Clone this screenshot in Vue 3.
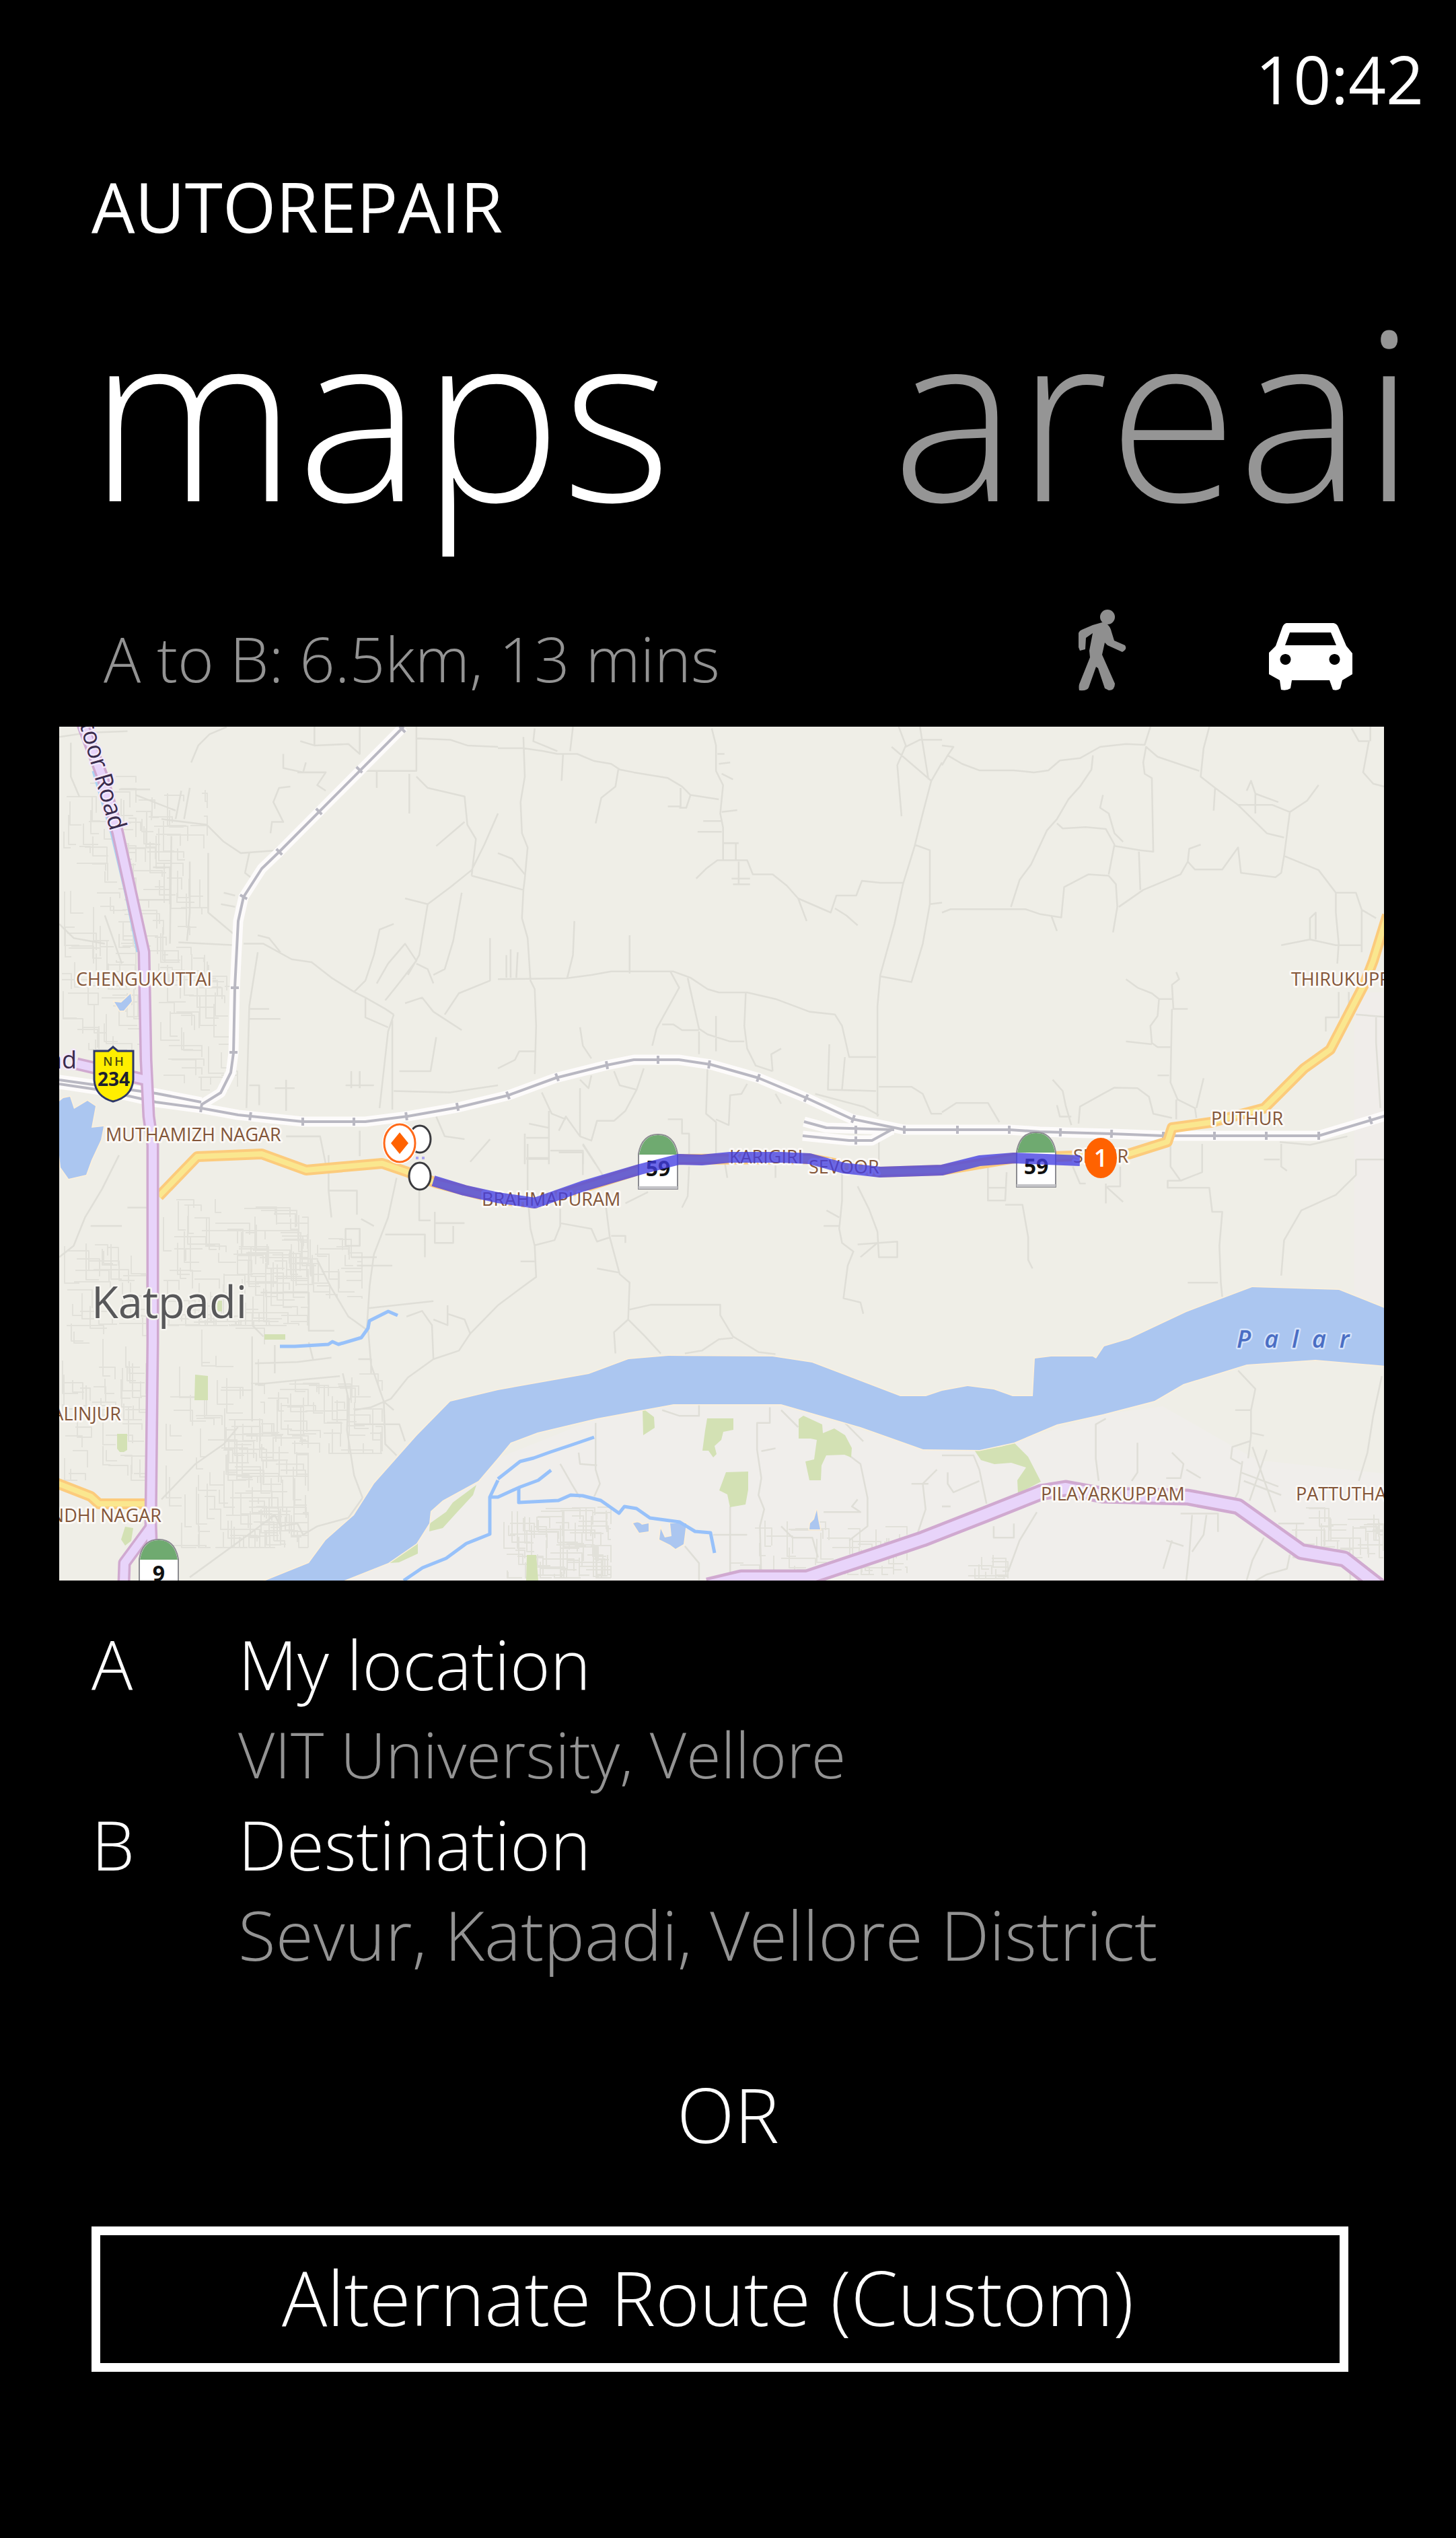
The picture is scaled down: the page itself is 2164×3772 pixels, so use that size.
<script setup>
import { ref } from 'vue'

const mode = ref('drive')

/* Small deterministic generator, so that the back streets look the same on every load. */
function makeRandom(seed) {
  let s = seed
  return () => {
    s = (s * 16807) % 2147483647
    return s / 2147483647
  }
}

/* Built-up districts: x, y, width, height, number of street pieces. */
const districts = [
  [4, 60, 110, 330, 70],
  [80, 90, 140, 260, 60],
  [145, 330, 120, 210, 50],
  [4, 380, 120, 100, 26],
  [0, 760, 130, 270, 70],
  [150, 700, 220, 190, 130],
  [330, 760, 120, 90, 30],
  [155, 890, 150, 330, 55],
  [0, 1000, 130, 120, 22],
  [240, 1030, 130, 190, 95],
  [300, 960, 180, 120, 50],
  [660, 1160, 160, 105, 90],
  [990, 1180, 270, 80, 45],
  [1832, 1160, 136, 75, 40],
  [1350, 1230, 60, 36, 16],
]

const rand = makeRandom(4711)
const streets = districts
  .map(([x, y, w, h, count]) => {
    let d = ''
    for (let i = 0; i < count; i++) {
      const px = Math.round(x + rand() * w)
      const py = Math.round(y + rand() * h)
      const len = Math.round(14 + rand() * 42)
      const side = Math.round(8 + rand() * 20)
      if (rand() < 0.5) {
        d += `M${px} ${py}h${Math.min(len, x + w - px)}v${Math.min(side, y + h - py)}`
      } else {
        d += `M${px} ${py}v${Math.min(len, y + h - py)}h${Math.min(side, x + w - px)}`
      }
    }
    return d
  })
  .join('')

/* Country lanes, grouped by survey sheet. */
const sheets = [
  {
    place: 'translate(-8 -10) scale(.421)',
    lanes:
      'M485 150L510 90L550 50L610 25 M19 60L120 45L260 40 M60 80V200L90 270 M870 75L920 90L1040 85L1080 120V24 M920 24V90 M810 120V170L880 185L890 150 M860 185H960L930 230L960 250 M1090 180H1280V24 M1140 180V240 M1280 65L1400 70L1460 90L1568 95 M1255 190V330 M1280 200L1320 240L1450 270L1460 370L1490 420L1475 550 M1568 330L1520 440L1475 530L1400 590L1320 650L1290 830L1250 900 M1350 445L1450 360 M1475 550L1568 575 M1240 630L1320 650 M1440 610L1410 780L1380 880L1340 900 M835 235L795 240L775 290L810 360L770 360L765 400 M380 350L540 370L600 430L660 470L790 460 M690 470L675 540L700 560 M545 470V680L640 760 M230 245H340 M290 265L430 320 M450 250L430 350 M480 240L460 350 M350 520H410V650 M415 410L410 790 M250 635H410 M480 500V680L470 780 M600 610L640 620 M590 650L640 660 M440 785L640 795 M19 720L70 770L180 790 M180 690L240 860 M670 790H740L840 845L910 855L980 910L1060 960L1100 980L1170 1020L1200 1040 M720 760L760 770L800 820 M1060 960L1100 920L1130 830L1150 740L1200 720 M1140 930L1180 860L1240 790L1280 850L1210 940L1170 990 M1280 860L1320 880L1340 930 M1240 1000L1300 980L1340 1030L1440 1095 M1380 1040L1430 965L1540 920V770 M1200 1040L1180 1100L1150 1370 M1195 1060V1375 M1100 980V1050L1180 1085 M720 820L690 1010L680 1370 M690 1020H760 M690 1055H800 M1030 1290H1130 M1050 1240V1300 M1080 1240V1300 M1200 1310L1400 1315L1568 1290 M1350 1120L1330 1240H1220 M690 1290H725V1360 M820 1270V1380 M780 1300H850 M820 1470H940L960 1568 M1080 1450V1540 M1350 1400L1380 1470L1450 1480 M1470 1560L1540 1480',
  },
  {
    place: 'translate(652 -10) scale(.421)',
    lanes:
      'M0 100H90L160 110L210 120H280L340 145L400 155L430 175L480 185L600 205L650 235L680 265L780 280 M90 60L95 200L80 290L85 400L105 450L95 560L90 600L85 700L105 770L115 920L130 950L135 1080L130 1250 M230 120L225 215 M265 24L255 110 M130 30L125 75L210 110 M425 175L415 235L365 275L345 365 M755 30L770 90V180L795 230L785 330L795 380V495 M775 120H800 M780 155L820 150 M790 190L830 210 M790 325L845 318 M725 357H790 M705 395H790 M645 240V305H600 M680 265L665 310H640 M795 435H850 M840 435V495 M700 560L735 525L775 495H880L900 545H970L1020 585L1060 630L1175 680L1195 620H1265L1285 568L1350 575H1430 M1060 630L1090 710 M1190 665L1230 690L1270 725 M825 560H890 M830 580H890 M850 500V580 M0 470L50 490L95 545 M0 575L90 600 M270 710L265 830L245 910 M465 760V895 M0 915L240 912L330 900L400 888H620L680 910L740 950L780 962H880L980 985L1100 1030L1190 1040L1215 1080L1240 1190H1335 M30 910V830 M45 910V810 M65 910L70 820 M610 890L640 945L560 1090L545 1150 M670 910L710 1090L740 1110L820 1135H870 M580 1075H620L650 1095H710 M770 1045V1170 M710 1100V1180 M875 965L870 1080L880 1160L910 1220L970 1240 M1000 1160L965 1180L970 1240 M290 1085L300 1150L330 1195 M1415 24L1440 90L1410 160L1425 340 M1390 95L1530 215L1500 330L1470 450L1430 580L1400 720L1350 900L1340 1010V1400 M1490 24L1520 210 M1440 95L1490 70H1568 M1568 150L1530 215 M1470 440L1525 460V650L1500 790L1460 925L1350 905 M1525 650L1568 645 M1170 1145L1165 1305L1335 1310 M1225 1190L1215 1305 M1345 1295H1460L1500 1320L1530 1390H1568 M1120 1320L1290 1365L1345 1395 M155 1315L190 1390L240 1410 M180 1380V1568 M100 1475H180 M100 1550H180 M95 1460V1568 M110 1425L180 1440 M410 1240L430 1290L490 1305L515 1230 M490 1305L450 1380L410 1415H350L330 1485L290 1470L240 1400L215 1450 M290 1300V1470 M290 1270L320 1300L330 1255 M185 1520H300V1568 M300 1500L345 1568 M740 1230L735 1390L770 1420V1560 M770 1410L815 1430L820 1325L860 1320L880 1285 M600 1410H650V1460H675V1568 M1345 1430V1568 M0 1230L60 1200L75 1170H130 M980 1320L1000 1355',
  },
  {
    place: 'translate(1312 -10) scale(.4273 .421)',
    lanes:
      'M0 90L40 95L20 125L0 160 M20 125L70 155L130 178H250L320 185L370 178L410 143L480 135L550 95L640 85L705 88L725 24 M525 125L520 175L480 235L440 280L400 350L365 390L310 510L270 565L240 660 M0 680L30 668H290L340 685L415 697L425 590L510 545L580 550L605 580L610 660L595 750 M380 690L400 745 M400 365L420 383L500 378L570 385L600 440L580 545 M560 265L550 310L580 330L600 400L630 430 M600 445L690 460L735 465L730 205L705 190L700 150L710 95L750 130L895 180 M930 24L910 100L900 200L950 240L1030 300L1080 350L1130 400L1190 415 M950 240L945 320 M1310 230L1270 285L1210 325L1190 480L1180 540L1160 555L1040 540L1030 450L975 528H880L855 500L860 455L900 440 M855 500L830 545L700 600L615 660 M685 465L690 600 M1030 300H1150L1210 325 M1090 260V330 M1060 250L1075 215L1090 260L1170 290 M1190 480L1310 530L1370 610H1440L1460 670L1510 700 M1370 610V680L1380 790L1375 860 M1460 670V820 M1180 795L1280 775L1370 795H1460 M1280 775V700L1300 680V775 M1425 30L1450 75H1485L1465 185L1500 225L1538 235 M1490 24V75 M640 915L680 945L730 965L755 985L750 1045L725 1080L730 1140L750 1155H795 M815 890L825 915L800 935L805 1020H855 M755 985H800 M800 1020L795 1280L820 1340L880 1370L885 1405 M640 1135L730 1145 M910 1265L885 1370 M815 1340V1410 M750 1255H790 M385 1270L420 1310L430 1360L450 1430 M400 1360L410 1400L450 1400 M475 1425L480 1365L560 1320L600 1298L680 1300L720 1330L735 1390L800 1405 M0 1385L50 1352H160L200 1420 M1380 960V1050H1335V1100 M1415 960V1010 M1440 1040L1538 1048 M1510 1050V1140L1525 1370 M1175 1490L1280 1500L1410 1470',
  },
  {
    place: 'translate(-8 620) scale(.421)',
    lanes:
      'M230 40L170 160L110 260L70 360L19 400 M130 290H240 M260 225H330 M970 40V165L980 260 M970 165H1070V250 M1210 120L1180 260L1130 390L1115 500L1105 650 M1170 320H1310V400 M1085 265L1130 290 M1290 150V270H1330 M1345 240V350H1410V290 M1345 280H1450 M1030 300H1080V360H1030Z M1050 400H1140 M1070 430H1195 M930 410L980 510L1040 610L1110 660L1120 780L1165 910L1200 940 M1110 580L1340 555 M1568 570L1470 670L1430 730L1340 760L1250 825L1190 900L1120 930L1060 940 M1245 610L1300 590L1335 640L1340 760 M1340 620L1390 640V570 M1390 600L1450 620L1470 670 M700 640L740 680 M730 525H900V660H990 M700 680V980 M710 775L860 770L980 755 M780 710V810 M900 700L915 760 M710 850L900 830L1010 820 M1020 810L1040 900L1035 1010L1060 1170L1090 1250 M1075 760H1120V810 M1165 910L1170 1060L1210 1100 M1060 990L1220 990L1240 1050 M1090 1250L1040 1320L930 1350L880 1380L860 1340L800 1350L780 1310L700 1370L480 1530 M650 1000L600 1060L500 1130L380 1255',
  },
  {
    place: 'translate(652 620) scale(.421)',
    lanes:
      'M105 0V180L115 300L130 360L135 470L80 510L0 570 M130 358L200 340L220 290V230 M100 50H180 M300 0L370 110 M215 30H300V110 M220 280L330 300L350 345L395 330L380 210 M395 330L430 460L465 490L460 620L410 665L415 740 M350 440L430 455 M400 325H450V350 M80 415H130 M460 620L520 680L575 740 M465 585L540 568H785V605L830 680L920 735L980 742 M830 685L780 690L720 730L660 740 M530 170L450 210 M675 80L670 185L650 225 M800 60L810 120 M980 60V120 M1215 100V200L1205 300L1215 350L1255 380L1235 430L1220 545L1280 560L1290 600 M1270 150L1310 230L1340 310L1345 400H1410V345L1270 355 M1150 290H1205 M1160 235L1205 260 M1280 400L1345 345 M345 985V1150L360 1200L340 1245 M285 1090L290 1130L350 1135 M220 1130L260 1200L290 1250 M580 940L640 960H710V920 M960 930V985H915V1080L930 1180L920 1240L940 1290L925 1350L930 1540 M930 1085L980 1075 M820 1280V1540 M760 1380H880 M1000 940L1060 1000 M1225 985L1290 1050 M1240 1100L1280 1130L1305 1250V1350L1240 1400 M1150 1300H1280L1250 1280L1270 1255 M1550 1150L1500 1200L1510 1290L1480 1380 M1460 1200H1520 M1000 1350L1040 1390H1110L1130 1460 M660 1420L710 1480V1540',
  },
  {
    place: 'translate(1312 620) scale(.4273 .421)',
    lanes:
      'M160 80V200H220L225 100 M160 155H220 M220 215H280L300 330V410L315 440 M455 80L480 140H500 M570 140V210 M570 150L630 205 M620 80V150H575 M795 0V80L830 130H785V155H930L940 240H975L965 360L970 490L975 540 M830 130L905 100V0 M855 490H960 M1180 0V80L1200 95 M1120 55H1175 M1440 55H1538 M1440 55V110L1370 180L1250 235L1190 340L1180 465 M1030 800L1090 865L1075 940L1075 1030L1065 1110 M1020 940H1075 M1075 1020L1120 1030 M1070 1050L1010 1070L1005 1110L1040 1130 M1045 1120L1030 1230L1020 1250 M1040 1160L1170 1210 M1050 1190L1180 1240 M1130 1080L1070 1260 M1080 1070L1160 1300 M1530 820L1500 960L1480 1090L1450 1190 M570 970L535 990V1110L545 1190 M680 1055V1160L660 1190 M800 1090L840 1130L830 1180H780 M850 1150L900 1180 M0 1100H110L130 1150L155 1270 M20 1160V1200L40 1230L130 1190 M0 1280H30 M330 1300L270 1400L230 1510 M180 1350V1390H250V1340 M870 1310L860 1450L850 1540 M830 1305H960V1370 M920 1310L910 1380L870 1440 M770 1500L800 1400 M780 1400L840 1420 M1120 1390L1080 1470L1060 1540 M1170 1340H1260 M1210 1450L1200 1500L1130 1520L1090 1543 M1340 1480H1420V1540',
  },
]

const places = [
  { name: 'CHENGUKUTTAI', x: 25, y: 385 },
  { name: 'MUTHAMIZH NAGAR', x: 69, y: 616 },
  { name: 'BRAHMAPURAM', x: 628, y: 712 },
  { name: 'KARIGIRI', x: 996, y: 649 },
  { name: 'SEVOOR', x: 1114, y: 664 },
  { name: 'SEVUR', x: 1507, y: 648 },
  { name: 'PUTHUR', x: 1712, y: 592 },
  { name: 'THIRUKUPPAM', x: 1831, y: 385 },
  { name: 'PILAYARKUPPAM', x: 1459, y: 1150 },
  { name: 'PATTUTHANGAL', x: 1838, y: 1150 },
  { name: 'KALINJUR', x: 92, y: 1031, anchor: 'end' },
  { name: 'GANDHI NAGAR', x: 152, y: 1182, anchor: 'end' },
]

const ticks = [
  [510, 4, 45], [446, 64, 45], [386, 126, 45], [327, 186, 45], [274, 253, 30], [261, 388, 0],
  [259, 484, 0], [211, 567, 98], [284, 579, 98], [362, 587, 90], [438, 587, 90], [516, 579, 82],
  [592, 565, 78], [667, 548, 70], [740, 521, 70], [814, 503, 80], [890, 495, 90], [966, 502, 98],
  [1039, 522, 108], [1110, 552, 115], [1180, 583, 110], [1184, 599, 90], [1184, 615, 90],
  [1256, 599, 90], [1335, 599, 90], [1412, 599, 90], [1488, 603, 92], [1564, 605, 92],
  [1641, 608, 90], [1717, 608, 90], [1794, 608, 90], [1872, 608, 90], [1949, 585, 72],
]

const shields = [
  { x: 860, y: 605, n: '59' },
  { x: 1422, y: 602, n: '59' },
  { x: 118, y: 1207, n: '9' },
]

const stops = [
  { key: 'A', title: 'My location', detail: 'VIT University, Vellore', big: false },
  { key: 'B', title: 'Destination', detail: 'Sevur, Katpadi, Vellore District', big: true },
]
</script>

<template>
  <main class="phone">
    <div class="status"><time>10:42</time></div>
    <h1 class="app-name">AUTOREPAIR</h1>

    <nav class="pivot">
      <button type="button" class="tab active">maps</button>
      <button type="button" class="tab">areai</button>
    </nav>

    <div class="summary">
      <p class="distance">A to B: 6.5km, 13 mins</p>
      <div class="modes">
        <button type="button" class="mode" aria-label="Walk" @click="mode = 'walk'">
          <svg class="walk" viewBox="0 0 72 122">
            <circle cx="44" cy="12" r="11" />
            <path d="M22 24 L36 20 Q47 21 50 34 L54 47 L70 54 Q74 60 66 64 L44 54 L40 50 L36 68 L55 111 Q55 121 46 121 L40 118 L30 88 L27 86 L16 117 Q14 122 2 121 Q1 116 2 112 L18 72 L17 62 L22 36 L12 43 L11 60 L3 62 L1 57 V36 Q2 32 8 30 Z" />
          </svg>
        </button>
        <button type="button" class="mode" aria-label="Drive" @click="mode = 'drive'">
          <svg class="car" viewBox="0 0 126 102">
            <path fill-rule="evenodd" d="M28 1 H98 Q103 2 105 7 L117 35 L126 46 V77 L111 86 L108 98 Q104 102 97 100 L92 86 H36 L34 98 Q28 102 20 100 L18 86 L2 77 V45 L12 35 L22 7 Q24 2 28 1 Z M33 15 L26 34 H102 L94 15 Z M26 47 a8 8 0 1 0 1 0 Z M99 47 a8 8 0 1 0 1 0 Z" />
          </svg>
        </button>
      </div>
    </div>

    <svg class="map" viewBox="0 0 1969 1269" role="img" aria-label="Route map">
      <rect width="1969" height="1269" fill="#efeee7" />
      <path fill="#f0eeeb" d="M421 1269L652 1087L799 1028L913 1007L1073 1007L1284 1074L1419 1064L1551 1022L1640 1010L1780 1090L1969 1110V1269Z" />
      <path fill="#f0edea" d="M1925 395H1969V860L1925 845Z" />

      <g class="lanes">
        <path class="back" :d="streets" />
        <g v-for="sheet in sheets" :key="sheet.place" :transform="sheet.place">
          <path :d="sheet.lanes" stroke-width="6" />
        </g>
      </g>

      <g fill="#d3e1b4">
        <path d="M202 963L221 965V1001H201Z M305 903H336V911H305Z M233 853H242V869H233Z M86 1051H101V1075L96 1078H90L86 1073Z M98 1189L110 1191L107 1210L98 1217L92 1208Z" />
        <path d="M620 1127L615 1142L590 1169L570 1191L550 1196L551 1184L575 1167L585 1153Z M533 1213V1229L505 1242L490 1243Z M695 1231H709L712 1269H694Z" />
        <path d="M867 1013L884 1026L885 1042L868 1053Z M963 1028H1002V1045L987 1048L984 1060L974 1069L977 1081L972 1086L965 1076H956L960 1046Z M991 1108L1024 1107V1134L1020 1156L997 1160L993 1141L981 1135Z M1099 1029L1106 1024L1134 1037L1135 1050L1152 1043L1168 1053L1178 1072L1177 1086L1167 1082L1140 1083L1133 1098L1132 1120H1115L1109 1092L1122 1089L1126 1060L1117 1058H1099Z" />
        <path d="M1360 1075L1400 1070L1419 1064L1440 1085L1459 1122L1425 1140L1424 1120L1437 1101L1415 1094L1390 1096L1370 1090Z" />
      </g>

      <g class="water">
        <path d="M304 1270L371 1243L396 1209L438 1172L468 1125L531 1054L581 1003L652 986L787 962L846 940L905 935L1060 936L1119 945L1250 995L1288 995L1312 987L1350 980L1389 985L1417 995L1447 995L1450 939L1474 936L1536 936L1541 939L1553 921L1590 910L1675 870L1773 833L1902 837L1972 865V950L1867 941L1765 948L1671 977L1628 1002L1551 1022L1483 1037L1419 1064L1368 1075L1284 1074L1191 1041L1073 1007L913 1007L799 1028L711 1049L671 1064L652 1087L623 1121L570 1150L552 1166L550 1184L531 1214L489 1243L421 1270Z" />
        <path d="M-4 560L6 552L16 550L22 568L42 556L54 564L48 596L66 594L62 614L48 644L40 666L14 672L2 655L-4 600Z" />
        <path d="M82 409L92 410L106 397L108 408L96 422H90Z" />
        <path d="M1116 1184L1122 1178L1126 1164L1128 1178L1131 1193H1115Z M853 1184Q861 1180 866 1186L876 1184V1196L862 1198Z M894 1192L900 1205L910 1203L908 1184L932 1184L928 1215L916 1222L908 1216L892 1208Z" />
      </g>
      <g class="creeks">
        <path d="M328 921H350L400 918L406 914L415 918L449 908L459 894L461 883L489 869L503 875" />
        <path d="M652 1118L685 1092L705 1087L730 1078L760 1068L795 1056" />
        <path d="M512 1269L540 1250L575 1236L605 1214L640 1200V1145L652 1145L685 1130L712 1120L731 1105 M640 1145L652 1120" />
        <path d="M683 1132V1153L742 1150L760 1142L778 1143L805 1150L832 1169L840 1159L858 1162L878 1176L922 1182L945 1196L968 1198L974 1228" />
      </g>

      <g class="rail-bed">
        <path d="M512 0L327 186L301 211L274 253L266 289L261 388L259 485L255 514L240 544L211 562" />
        <path d="M0 525L144 545L211 558" />
        <path d="M0 531L68 541L144 558L211 567L266 577L362 587H455L518 579L592 566L667 548L738 522L814 503L854 495H921L968 502L1039 522L1111 552L1178 583L1256 599H1412L1457 602L1564 605L1641 608H1872L1949 585L1972 578" />
        <path d="M1107 587L1140 596L1241 599 M1105 608L1174 615H1208L1237 599" />
      </g>
      <g class="rail">
        <path d="M512 0L327 186L301 211L274 253L266 289L261 388L259 485L255 514L240 544L211 562" />
        <path d="M0 525L144 545L211 558" />
        <path d="M0 531L68 541L144 558L211 567L266 577L362 587H455L518 579L592 566L667 548L738 522L814 503L854 495H921L968 502L1039 522L1111 552L1178 583L1256 599H1412L1457 602L1564 605L1641 608H1872L1949 585L1972 578" />
        <path d="M1107 587L1140 596L1241 599 M1105 608L1174 615H1208L1237 599" />
        <path v-for="t in ticks" :key="t.join()" d="M-6 0H6" :transform="`translate(${t[0]} ${t[1]}) rotate(${t[2]})`" />
      </g>

      <g class="road yellow">
        <path class="edge" d="M148 698L205 639L301 635L367 659L480 649L518 662L560 678L652 702L707 708L863 658L921 643L1115 642L1220 662L1312 659L1419 641L1590 635L1647 617L1654 596L1712 588L1791 567L1850 508L1889 480L1940 382L1953 348L1974 280" />
        <path class="edge" d="M-4 1124L47 1144L59 1155H127" />
        <path class="core" d="M148 698L205 639L301 635L367 659L480 649L518 662L560 678L652 702L707 708L863 658L921 643L1115 642L1220 662L1312 659L1419 641L1590 635L1647 617L1654 596L1712 588L1791 567L1850 508L1889 480L1940 382L1953 348L1974 280" />
        <path class="core" d="M-4 1124L47 1144L59 1155H127" />
      </g>

      <path d="M50 66L77 158L99 251L116 335" fill="none" stroke="#a8d4f4" stroke-width="3" />
      <g class="road purple">
        <path class="edge" d="M26 501L129 525 M34 -6L64 74L87 158L126 335L129 495L133 579L139 622V915L136 1184L137 1212 M136 1190L97 1243L96 1272" />
        <path class="core" d="M26 501L129 525 M34 -6L64 74L87 158L126 335L129 495L133 579L139 622V915L136 1184L137 1212 M136 1190L97 1243L96 1272" />
      </g>
      <g class="road purple wide">
        <path class="edge" d="M964 1277L1014 1265H1111L1216 1230L1284 1207L1376 1171L1459 1138L1496 1132L1551 1142L1677 1145L1752 1159L1846 1226L1910 1237L1965 1280" />
        <path class="core" d="M964 1277L1014 1265H1111L1216 1230L1284 1207L1376 1171L1459 1138L1496 1132L1551 1142L1677 1145L1752 1159L1846 1226L1910 1237L1965 1280" />
      </g>

      <g class="places">
        <text v-for="p in places" :key="p.name" :x="p.x" :y="p.y" :text-anchor="p.anchor || 'start'">{{ p.name }}</text>
      </g>
      <text class="city" x="48" y="879">Katpadi</text>
      <text class="river" x="1750" y="923">Palar</text>
      <text class="street" text-anchor="end" transform="translate(76 156) rotate(74)">Chittoor Road</text>
      <text class="street" x="26" y="508" text-anchor="end">Road</text>

      <g v-for="s in shields" :key="s.x" :transform="`translate(${s.x} ${s.y})`">
        <path d="M1 82V30Q6 1 30 1Q54 1 59 30V82Z" fill="#fff" stroke="#8b8b90" stroke-width="2" />
        <path d="M2 31Q7 2 30 2Q53 2 58 31Z" fill="#6faa70" />
        <path d="M1 80H59" stroke="#c4c4c8" stroke-width="4" />
        <text class="shield-no" x="30" y="63">{{ s.n }}</text>
      </g>

      <path d="M52 482H73L80 476L87 482H110V525Q108 550 80 557Q54 550 52 525Z" fill="#ffee00" stroke="#2d3768" stroke-width="3" />
      <text class="nh" x="82" y="504">NH</text>
      <text class="nh-no" x="81" y="534">234</text>

      <path class="route" d="M556 675L602 689L652 700L707 708L778 683L863 658L921 643L955 644L997 640H1073L1115 642L1166 656L1220 662L1312 659L1368 645L1419 641L1517 645" />

      <g fill="#fff" stroke="#3a3a3e" stroke-width="3">
        <ellipse cx="536" cy="613" rx="16" ry="20" />
        <ellipse cx="536" cy="668" rx="16" ry="20" />
      </g>
      <path d="M530 641H534 M539 641H543" stroke="#aaa4f0" stroke-width="4" />
      <ellipse cx="506" cy="619" rx="26" ry="31" fill="#fff" />
      <ellipse cx="506" cy="619" rx="23" ry="28" fill="#fff" stroke="#ff6a1a" stroke-width="3" />
      <path d="M506 603L519 619L506 635L493 619Z" fill="#ff6200" />
      <ellipse cx="1548" cy="641" rx="24" ry="30" fill="#ff6200" />
      <text class="pin-no" x="1548" y="654">1</text>
    </svg>

    <dl class="stops">
      <template v-for="s in stops" :key="s.key">
        <dt>{{ s.key }}</dt>
        <dd>
          <span class="title">{{ s.title }}</span>
          <span class="detail" :class="{ big: s.big }">{{ s.detail }}</span>
        </dd>
      </template>
    </dl>

    <p class="or">OR</p>
    <button type="button" class="alternate">Alternate Route (Custom)</button>
  </main>
</template>

<style>
body {
  margin: 0;
  background: #000;
}
</style>

<style scoped>
.phone {
  box-sizing: border-box;
  display: flex;
  flex-direction: column;
  min-height: 100vh;
  padding: 57px 0 240px;
  background: #000;
  color: #fff;
  font-family: "Open Sans", "Noto Sans", sans-serif;
  font-weight: 350;
  overflow: hidden;
}
h1, p, dl, dd { margin: 0; }
button {
  margin: 0;
  padding: 0;
  border: 0;
  background: none;
  color: inherit;
  font: inherit;
  cursor: pointer;
}
.status {
  padding-right: 48px;
  text-align: right;
  font-size: 98px;
  font-weight: 400;
  line-height: 120px;
}
.app-name {
  margin-top: 70px;
  padding-left: 136px;
  font-size: 102px;
  font-weight: 400;
  line-height: 120px;
}
.pivot {
  display: flex;
  justify-content: space-between;
  margin-top: 43px;
  padding: 0 60px 0 132px;
  font-size: 350px;
  line-height: 400px;
}
.tab { color: #959595; }
.tab.active { color: #fff; }
.summary {
  display: flex;
  justify-content: space-between;
  align-items: flex-end;
  margin-top: 95px;
  padding: 0 154px;
}
.distance {
  color: #939393;
  font-size: 92px;
  line-height: 120px;
}
.modes {
  display: flex;
  align-items: flex-end;
  gap: 210px;
  padding-bottom: 12px;
}
.mode { display: flex; }
.walk { width: 72px; height: 122px; fill: #8f8f8f; }
.car { width: 126px; height: 102px; fill: #fff; }
.map {
  display: block;
  margin: 41px 107px 0 88px;
  overflow: hidden;
}
.lanes { fill: none; stroke: #dfded7; stroke-linejoin: round; }
.lanes .back { stroke: #e2e1da; stroke-width: 2; }
.water { fill: #abc6f0; stroke: #fdf0da; stroke-width: 3; paint-order: stroke; }
.creeks { fill: none; stroke: #97c1fa; stroke-width: 5; stroke-linejoin: round; }
.rail-bed { fill: none; stroke: #fdfbfb; stroke-width: 15; stroke-linejoin: round; }
.rail { fill: none; stroke: #b9b8c2; stroke-width: 4; stroke-linejoin: round; }
.road { fill: none; stroke-linejoin: round; }
.yellow .edge { stroke: #fccb7c; stroke-width: 16; }
.yellow .core { stroke: #fae78f; stroke-width: 8; }
.purple .edge { stroke: #d0a9d0; stroke-width: 19; }
.purple .core { stroke: #e8d4fa; stroke-width: 12; }
.wide .edge { stroke-width: 25; }
.wide .core { stroke-width: 16; }
.map text { font-weight: 400; stroke-linejoin: round; paint-order: stroke; }
.map .places text { font-size: 27px; font-weight: 500; fill: #835538; stroke: #fbf9f6; stroke-width: 6px; }
.map .city { font-size: 65px; fill: #58585a; stroke: #f6f5f0; stroke-width: 5px; }
.map .river { font-size: 36px; font-weight: 600; font-style: italic; letter-spacing: 20px; fill: #4a6ec4; stroke: #d4e2fa; stroke-width: 5px; }
.map .street { font-size: 36px; font-weight: 500; fill: #3a2c4c; stroke: #f3e8fb; stroke-width: 5px; }
.map .shield-no { font-size: 32px; font-weight: 700; text-anchor: middle; fill: #111; }
.map .nh { font-size: 18px; font-weight: 600; letter-spacing: 3px; text-anchor: middle; fill: #4a4a10; }
.map .nh-no { font-size: 28px; font-weight: 700; text-anchor: middle; fill: #1c2030; }
.map .pin-no { font-size: 36px; font-weight: 600; text-anchor: middle; fill: #fff; }
.route { fill: none; stroke: #433ee2; stroke-width: 16; stroke-linejoin: round; opacity: .78; }
.stops {
  display: grid;
  grid-template-columns: 218px 1fr;
  margin-top: 57px;
  padding-left: 136px;
  font-size: 102px;
  line-height: 134px;
}
.stops dd { display: flex; flex-direction: column; }
.detail { color: #939393; font-size: 94px; }
.detail.big { font-size: 102px; }
.or {
  margin-top: 140px;
  text-align: center;
  font-size: 112px;
  line-height: 120px;
}
.alternate {
  height: 216px;
  margin: 107px 160px 0 136px;
  padding: 0 36px 8px 0;
  border: 13px solid #fff;
  font-size: 112px;
}
</style>
